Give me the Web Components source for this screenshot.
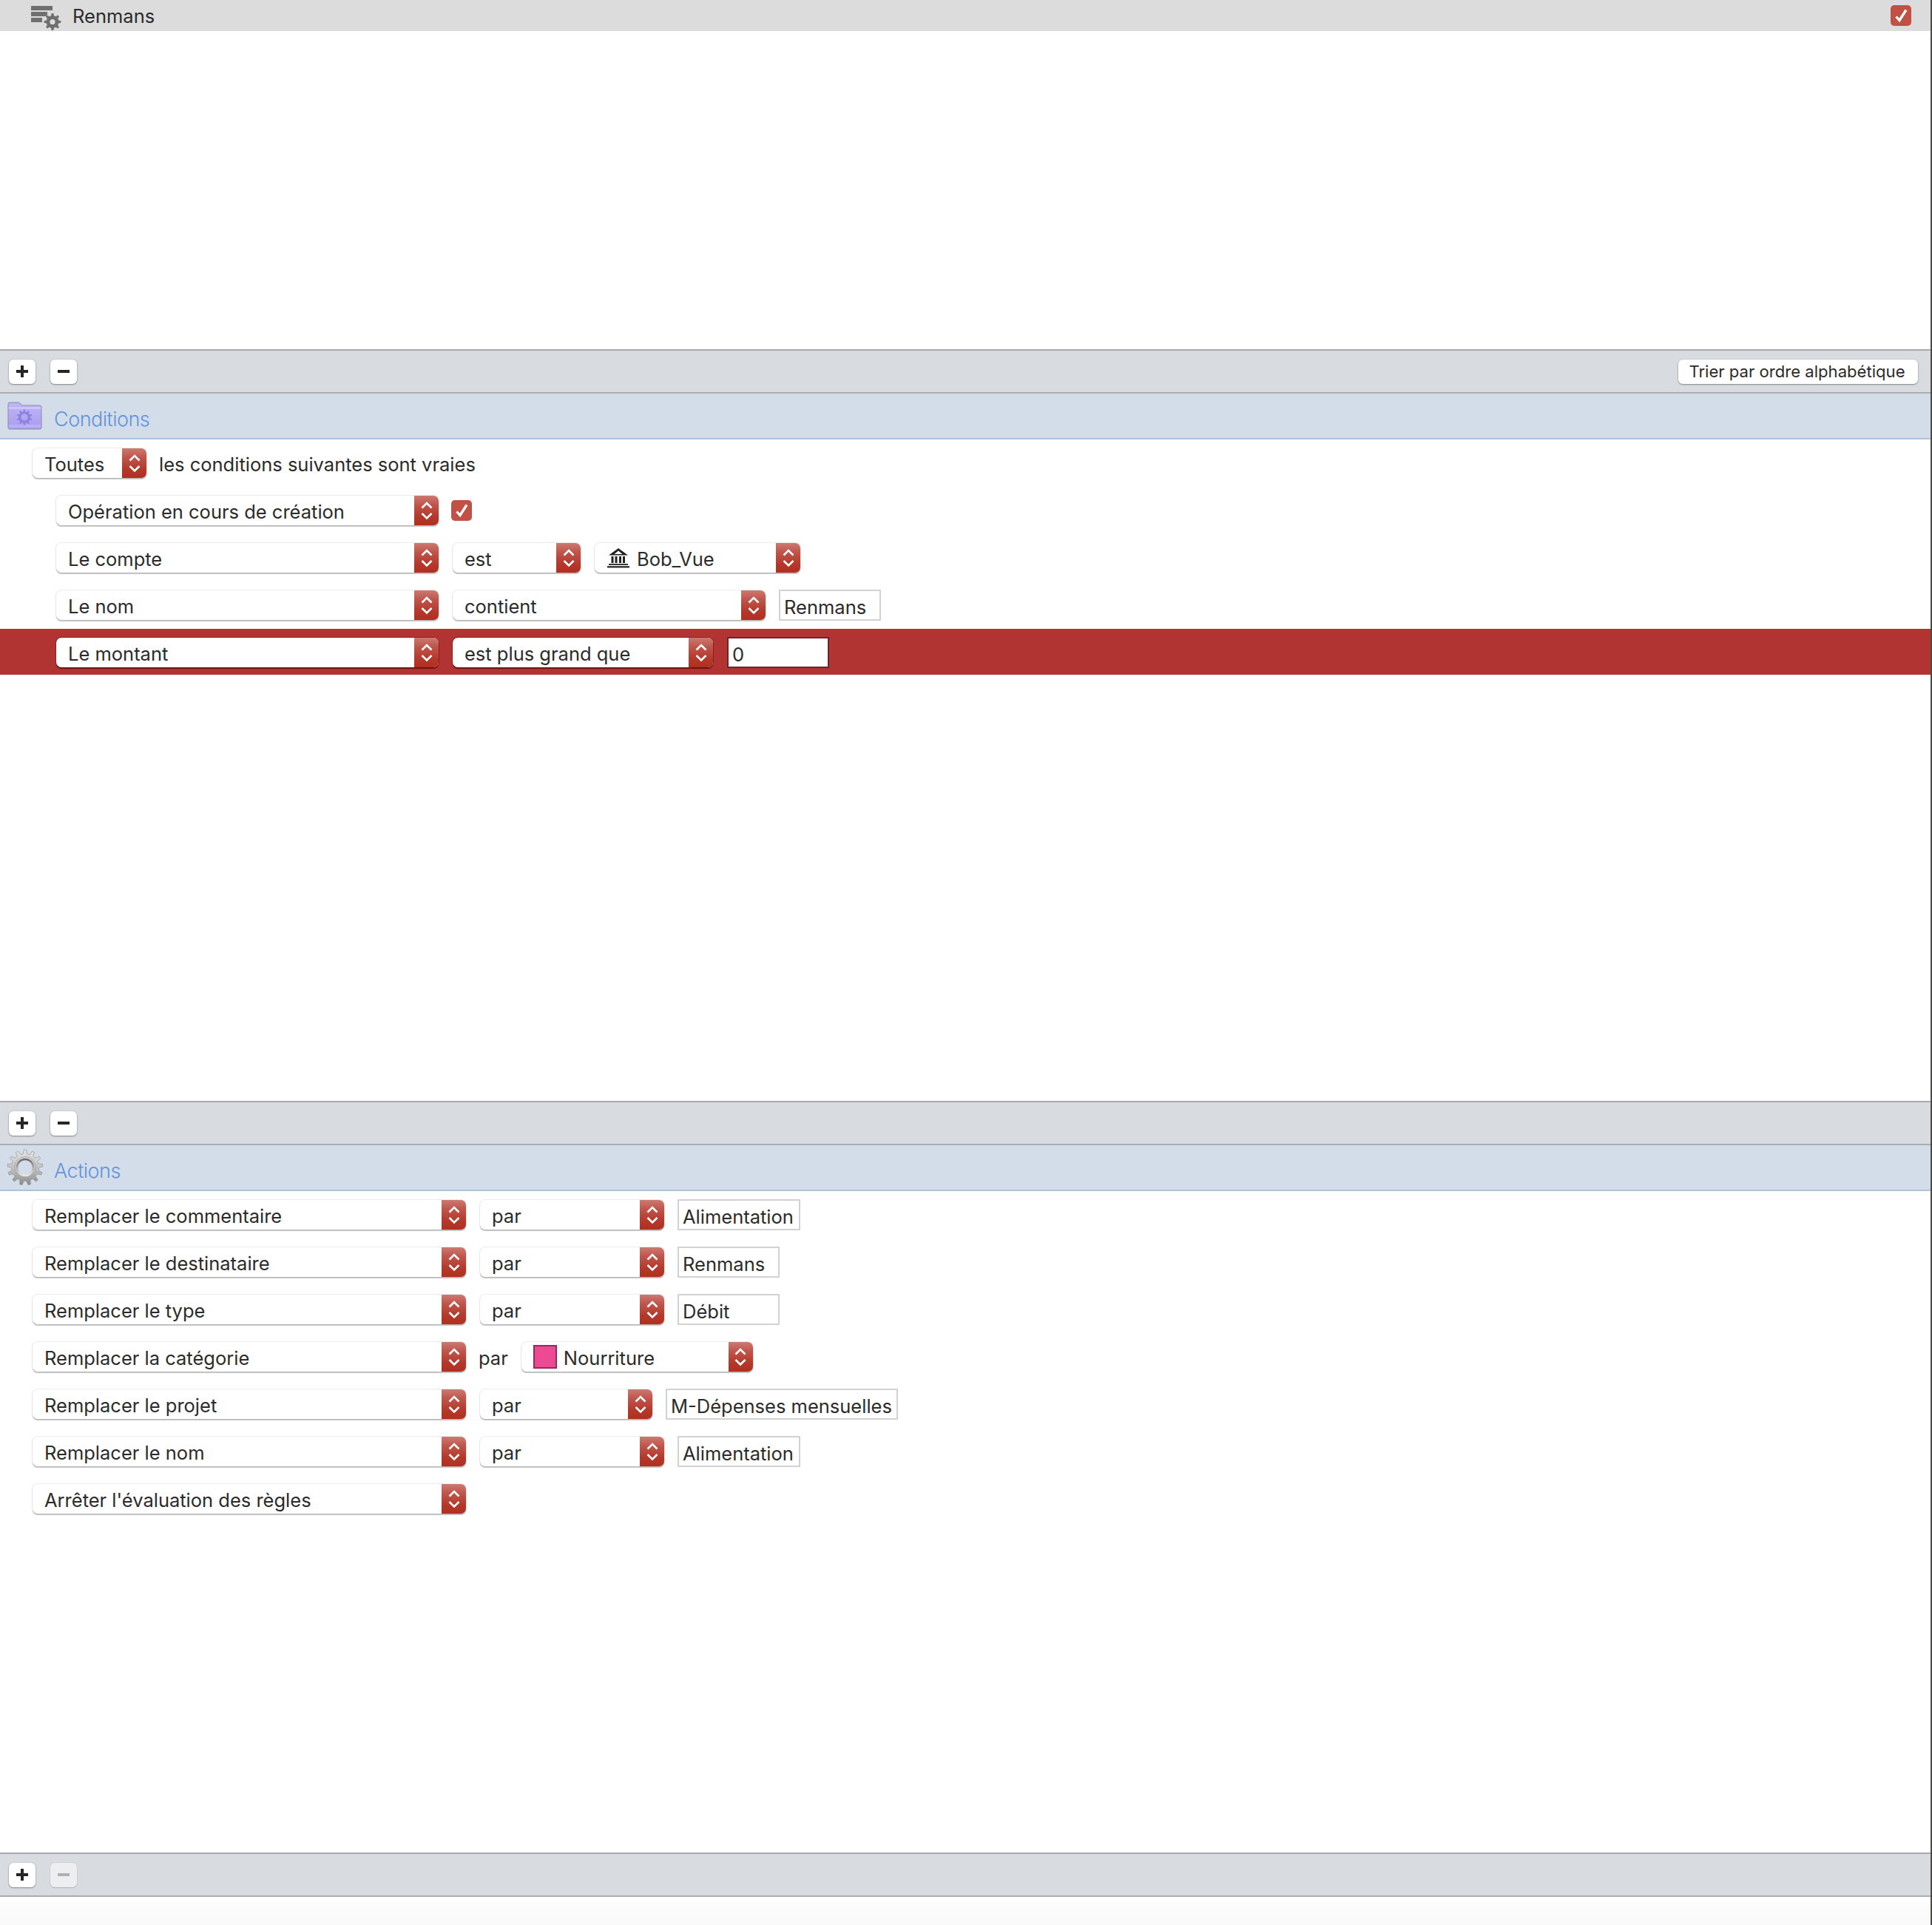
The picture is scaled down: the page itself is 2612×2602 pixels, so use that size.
<!DOCTYPE html>
<html lang="fr"><head><meta charset="utf-8"><title>Règles</title>
<style>
html,body{margin:0;padding:0;background:#fff}
body{font-family:Inter,"Liberation Sans",Arial,sans-serif;font-size:25.5px;color:#2b2b2b}
</style></head>
<body>
<rule-app>
  <title-bar>Renmans</title-bar>
  <empty-pane style="--h:430px"></empty-pane>
  <tool-bar sort></tool-bar>
  <section-head kind="folder">Conditions</section-head>
  <empty-pane style="--h:894px">
    <rule-row indent="44"><x-select w="154">Toutes</x-select><x-label>les conditions suivantes sont vraies</x-label></rule-row>
    <rule-row indent="76"><x-select w="517">Opération en cours de création</x-select><x-check style="margin-left:-2px"></x-check></rule-row>
    <rule-row indent="76"><x-select w="517">Le compte</x-select><x-select w="173">est</x-select><x-select w="278" icon="bank">Bob_Vue</x-select></rule-row>
    <rule-row indent="76"><x-select w="517">Le nom</x-select><x-select w="423">contient</x-select><x-input w="138">Renmans</x-input></rule-row>
    <rule-row indent="76" selected><x-select w="517" on-red>Le montant</x-select><x-select w="352" on-red>est plus grand que</x-select><x-input w="138" on-red>0</x-input></rule-row>
  </empty-pane>
  <tool-bar></tool-bar>
  <section-head kind="gear">Actions</section-head>
  <empty-pane style="--h:894px">
    <rule-row indent="44"><x-select w="586">Remplacer le commentaire</x-select><x-select w="249">par</x-select><x-input w="166">Alimentation</x-input></rule-row>
    <rule-row indent="44"><x-select w="586">Remplacer le destinataire</x-select><x-select w="249">par</x-select><x-input w="138">Renmans</x-input></rule-row>
    <rule-row indent="44"><x-select w="586">Remplacer le type</x-select><x-select w="249">par</x-select><x-input w="138">Débit</x-input></rule-row>
    <rule-row indent="44"><x-select w="586">Remplacer la catégorie</x-select><x-label>par</x-label><x-select w="313" icon="swatch">Nourriture</x-select></rule-row>
    <rule-row indent="44"><x-select w="586">Remplacer le projet</x-select><x-select w="233">par</x-select><x-input w="314">M-Dépenses mensuelles</x-input></rule-row>
    <rule-row indent="44"><x-select w="586">Remplacer le nom</x-select><x-select w="249">par</x-select><x-input w="166">Alimentation</x-input></rule-row>
    <rule-row indent="44"><x-select w="586">Arrêter l'évaluation des règles</x-select></rule-row>
  </empty-pane>
  <tool-bar minus-disabled></tool-bar>
  <foot-strip></foot-strip>
</rule-app>
<script>
function gearPath(cx,cy,ro,ri,teeth,hole){
  let d='';const n=teeth,step=Math.PI*2/n;
  const P=(r,a)=>(cx+r*Math.cos(a)).toFixed(2)+' '+(cy+r*Math.sin(a)).toFixed(2);
  for(let i=0;i<n;i++){const a=i*step-Math.PI/2;
    d+=(i?'L':'M')+P(ri,a-step*.30)+'L'+P(ro,a-step*.15)+'L'+P(ro,a+step*.15)+'L'+P(ri,a+step*.30);}
  d+='Z';
  if(hole){d+='M'+P(hole,0)+'A'+hole+' '+hole+' 0 1 0 '+P(hole,Math.PI)+'A'+hole+' '+hole+' 0 1 0 '+P(hole,0)+'Z';}
  return d;
}
function def(name,css,html,init){
  customElements.define(name,class extends HTMLElement{
    constructor(){super();const s=this.attachShadow({mode:'open'});s.innerHTML='<style>'+css+'</style>'+(typeof html==='function'?html(this):html);}
    connectedCallback(){if(init)init(this);}
  });
}
def('rule-app',':host{display:flex;flex-direction:column;height:2602px;border-right:2px solid #4a4a45;box-sizing:border-box;width:2612px;overflow:hidden}','<slot></slot>');
def('title-bar',`:host{display:flex;align-items:center;height:42px;background:#dcdcdc;padding-left:42px;padding-right:28px;margin-right:-2px;position:relative;z-index:1;flex:none}
 svg{width:42px;height:36px;flex:none;margin-top:3px} .t{margin-left:14px;flex:1;color:#2b2b2b;position:relative;top:0}`,
 ()=>`<svg viewBox="0 0 42 36"><g fill="#6f6f6f"><rect x="0" y="3" width="29" height="6"/><rect x="0" y="11" width="22" height="6"/><rect x="0" y="19" width="15" height="6"/><path fill-rule="evenodd" stroke="#dcdcdc" stroke-width="1" paint-order="stroke" d="${gearPath(29,24.5,11.5,8.500,8,3.600)}"/></g></svg><span class="t"><slot></slot></span><x-check></x-check>`);
def('empty-pane',':host{display:block;height:var(--h);flex:none;background:#fff;padding-top:0;box-sizing:border-box}','<slot></slot>');
def('tool-bar',`:host{display:flex;align-items:center;gap:20px;height:60px;box-sizing:border-box;background:#d8dbe0;border-top:2px solid #a6a9ad;border-bottom:2px solid #a9acb0;padding:0 17px 0 12px;flex:none}
 .sp{flex:1}
 button{all:unset;box-sizing:border-box;display:flex;align-items:center;justify-content:center;width:36px;height:33px;border-radius:6px;background:#fff;box-shadow:0 0 0 1px rgba(0,0,0,.06),0 1px 2px rgba(0,0,0,.35)}
 button.off{background:#eceef0;box-shadow:0 0 0 1px rgba(0,0,0,.05),0 1px 1px rgba(0,0,0,.15)}
 svg{width:18px;height:18px}
 .sort{width:324px;padding-right:3px;font:22.100px Inter,"Liberation Sans",Arial,sans-serif;color:#2b2b2b;justify-content:center;white-space:nowrap}`,
 h=>`<button aria-label="Ajouter"><svg viewBox="0 0 18 18"><path d="M7 1h4v6h6v4h-6v6H7v-6H1V7h6z" fill="#262626"/></svg></button>
 <button aria-label="Supprimer" class="${h.hasAttribute('minus-disabled')?'off':''}"><svg viewBox="0 0 18 18"><rect x="1" y="7" width="16" height="4" fill="${h.hasAttribute('minus-disabled')?'#b0b0b0':'#262626'}"/></svg></button>
 <span class="sp"></span>${h.hasAttribute('sort')?'<button class="sort">Trier par ordre alphabétique</button>':''}`);
def('section-head',`:host{display:flex;align-items:center;height:62px;box-sizing:border-box;background:#d3ddea;border-bottom:2px solid #afc1da;flex:none;position:relative}
 .ic{width:73px;height:60px;flex:none;position:relative}
 svg{position:absolute}
 .t{font:300 27px Inter,"Liberation Sans",sans-serif;letter-spacing:-.5px;color:#6293dc;position:relative;top:4px}`,
 h=>{
  if(h.getAttribute('kind')==='folder')return `<span class="ic"><svg style="left:10px;top:11px" width="47" height="38" viewBox="0 0 47 38">
   <defs><linearGradient id="f" x1="0" y1="0" x2="0" y2="1"><stop offset="0" stop-color="#c0b6f4"/><stop offset="1" stop-color="#a89cf0"/></linearGradient></defs>
   <path d="M1 3q0-2 2-2h12q2 0 4 3l1 1h24q2 0 2 2v28q0 2-2 2H3q-2 0-2-2z" fill="url(#f)" stroke="#8e8aa8" stroke-width="1"/>
   <path d="M1.500 8.500h44" stroke="#d9d4fa" stroke-width="1.500"/><rect x="2" y="31" width="43" height="4" fill="#b9aff5"/>
   <path fill="#8f82e0" fill-rule="evenodd" d="${gearPath(23,21,10.500,8,10,4.500)}"/></svg></span><span class="t"><slot></slot></span>`;
  return `<span class="ic"><svg style="left:9px;top:5px" width="50" height="50" viewBox="0 0 50 50">
   <defs><linearGradient id="g" x1="0" y1="0" x2="0" y2="1"><stop offset="0" stop-color="#e4e4e4"/><stop offset=".55" stop-color="#c0c0c0"/><stop offset="1" stop-color="#8a8a8a"/></linearGradient>
   <linearGradient id="g2" x1="0" y1="0" x2="0" y2="1"><stop offset="0" stop-color="#6a6a6a"/><stop offset="1" stop-color="#e8e8e8"/></linearGradient></defs>
   <path fill="url(#g)" stroke="#959595" stroke-width=".7" fill-rule="evenodd" d="${gearPath(25,25,24,18.500,13,0)}"/>
   <circle cx="25" cy="25" r="14.500" fill="none" stroke="#a8a8a8" stroke-width="1"/>
   <circle cx="25" cy="25" r="11" fill="#d3ddea" stroke="url(#g2)" stroke-width="2.500"/></svg></span><span class="t"><slot></slot></span>`;
 });
def('rule-row',`:host{display:flex;align-items:center;gap:19px;padding:12px 0;box-sizing:border-box;height:64px;padding-left:var(--i)}
 :host([selected]){background:#b13432;height:62px;padding-bottom:10px;margin-bottom:2px}`,'<slot></slot>',h=>h.style.setProperty('--i',h.getAttribute('indent')+'px'));
def('x-label',':host{display:block;line-height:40px;white-space:nowrap;margin-left:-2px;margin-right:-1px;position:relative;top:1.500px}','<slot></slot>');
def('x-select',`:host{display:flex;height:40px;box-sizing:border-box;border-radius:7px;background:#fff;width:var(--w);flex:none;box-shadow:0 0 0 1px rgba(0,0,0,.08),0 2px 1px -0.500px rgba(0,0,0,.22)}
 :host([on-red]){box-shadow:0 0 0 1px rgba(80,0,0,.35),0 2px 1px -0.500px rgba(60,0,0,.55)}
 .b{flex:1;display:flex;align-items:center;padding-left:16px;white-space:nowrap;overflow:hidden;min-width:0}
 .t{position:relative;top:1.500px}
 .s{width:33px;flex:none;border-radius:0 7px 7px 0;background:linear-gradient(#cb7a72,#c0564c 30%,#b3392b 70%,#b22f20);display:flex;align-items:center;justify-content:center}
 .s svg{width:18px;height:40px;display:block}
 .sw{width:32px;height:32px;box-sizing:border-box;background:#ec4a93;border:2px solid #8f2a62;margin-right:9px;flex:none}
 .bank{width:32px;height:28px;margin:-1px 8px 0 1px;flex:none}`,
 h=>{const ic=h.getAttribute('icon');let pre='';
  if(ic==='swatch')pre='<span class="sw"></span>';
  if(ic==='bank')pre=`<svg class="bank" viewBox="0 0 32 28"><g fill="#222"><path d="M15 1 L28 10.500H2ZM15 4.500 L9.500 9H20.500Z" fill-rule="evenodd"/><rect x="5.500" y="12" width="3" height="9"/><rect x="10.500" y="12" width="3" height="9"/><rect x="16" y="12" width="3" height="9"/><rect x="21" y="12" width="3" height="9"/><rect x="2" y="22" width="26" height="1.800"/><rect x="0" y="25.200" width="30" height="2.200"/></g></svg>`;
  return `<span class="b">${pre}<span class="t"><slot></slot></span></span><span class="s"><svg viewBox="0 0 18 40"><path d="M2.500 16.500 9 10l6.500 6.500M2.500 24 9 30.500 15.500 24" fill="none" stroke="#fff" stroke-width="2.600"/></svg></span>`;},
 h=>h.style.setProperty('--w',h.getAttribute('w')+'px'));
def('x-input',`:host{display:flex;align-items:center;height:42px;margin:-1px 0 -1px -1px;width:var(--w);box-sizing:border-box;border:2px solid #d2d2d2;background:#fff;padding-left:5px;flex:none;white-space:nowrap;overflow:hidden}
 :host([on-red]){border-color:#6e2428;margin-left:0}
 .t{position:relative;top:2px}`,'<span class="t"><slot></slot></span>',h=>h.style.setProperty('--w',h.getAttribute('w')+'px'));
def('x-check',`:host{display:block;width:28px;height:28px;border-radius:5px;background:#c05245;flex:none}
 svg{display:block;width:28px;height:28px}`,'<svg viewBox="0 0 28 28"><path d="M7.500 15.500l4.500 5 9-14" fill="none" stroke="#fff" stroke-width="3.300"/></svg>');
def('foot-strip',':host{display:block;flex:1;background:linear-gradient(#fff,#f8f8f8);margin-right:-2px}','');
</script>
</body></html>
